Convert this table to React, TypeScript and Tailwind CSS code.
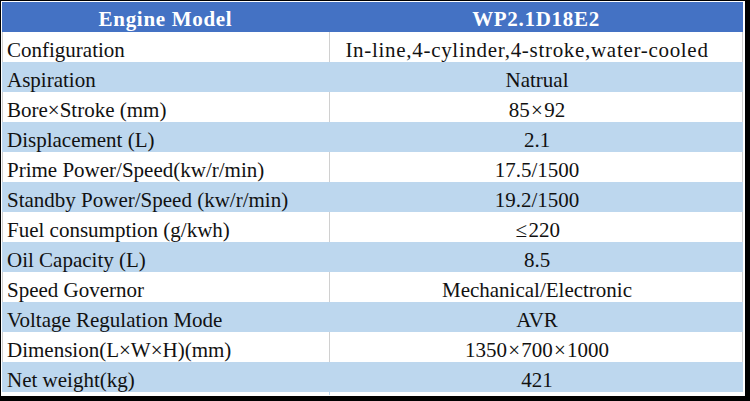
import React from "react";

const rows: [string, string][] = [
  ["Configuration", "In-line,4-cylinder,4-stroke,water-cooled"],
  ["Aspiration", "Natrual"],
  ["Bore×Stroke (mm)", "85×92"],
  ["Displacement (L)", "2.1"],
  ["Prime Power/Speed(kw/r/min)", "17.5/1500"],
  ["Standby Power/Speed (kw/r/min)", "19.2/1500"],
  ["Fuel consumption (g/kwh)", "≤220"],
  ["Oil Capacity (L)", "8.5"],
  ["Speed Governor", "Mechanical/Electronic"],
  ["Voltage Regulation Mode", "AVR"],
  ["Dimension(L×W×H)(mm)", "1350×700×1000"],
  ["Net weight(kg)", "421"],
];

function Value({ text }: { text: string }) {
  const parts = text.split(/([×≤])/);
  return (
    <>
      {parts.map((p, i) => {
        if (p === "×")
          return (
            <span key={i} className="inline-block w-[0.68em] text-center">
              ×
            </span>
          );
        if (p === "≤")
          return (
            <span key={i} className="inline-block w-[0.68em] text-center">
              ≤
            </span>
          );
        return <React.Fragment key={i}>{p}</React.Fragment>;
      })}
    </>
  );
}

export default function App() {
  return (
    <div className="w-[750px] h-[401px] bg-black pl-[1px] pt-[1px] pr-[5px] pb-[5px] font-['Liberation_Serif','Times_New_Roman',serif]">
      <div className="w-full h-full bg-white pl-[1px] pt-[1px]">
        <div className="w-[741px] flex flex-col">
          <div className="grid grid-cols-[327px_414px] h-[30px] bg-[#4472C4] text-white font-bold text-[21px] tracking-[0.7px]">
            <div className="text-center leading-[30px] pt-[2px]">Engine Model</div>
            <div className="text-center leading-[30px] pt-[2px]">WP2.1D18E2</div>
          </div>
          {rows.map(([k, v], i) => {
            const blue = i % 2 === 1;
            const wide = i === 0;
            return (
              <div
                key={k}
                className={
                  blue
                    ? "grid grid-cols-[327px_414px] h-[30px] bg-[#BDD7EE] border-x border-[#BDD7EE] text-[21px] text-[#111]"
                    : "grid grid-cols-[327px_414px] h-[30px] bg-white border-x border-[#d0d0d0] text-[21px] text-[#111]"
                }
              >
                <div
                  className={
                    blue
                      ? "pl-[4px] leading-[30px] pt-[3px] whitespace-nowrap border-r border-[#BDD7EE]"
                      : "pl-[4px] leading-[30px] pt-[3px] whitespace-nowrap border-r border-[#d0d0d0]"
                  }
                >
                  {k}
                </div>
                <div
                  className={
                    wide
                      ? "text-center leading-[30px] pt-[3px] pr-[20px] whitespace-nowrap tracking-[0.7px]"
                      : "text-center leading-[30px] pt-[3px] whitespace-nowrap"
                  }
                >
                  <Value text={v} />
                </div>
              </div>
            );
          })}
        </div>
      </div>
    </div>
  );
}
